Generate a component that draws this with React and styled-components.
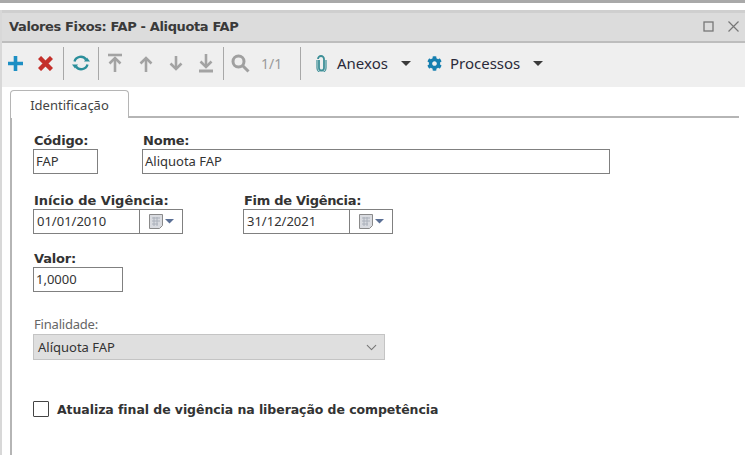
import React from "react";
import styled, { createGlobalStyle } from "styled-components";
import { FaCog } from "react-icons/fa";
import { ChevronDown } from "lucide-react";

const Global = createGlobalStyle`
  html, body {
    margin: 0;
    background: #fff;
    overflow: hidden;
  }
  body {
    font-family: "Noto Sans", "Liberation Sans", sans-serif;
    color: #222;
  }
`;

const Page = styled.div`
  width: 745px;
  height: 455px;
  display: flex;
  flex-direction: column;
  overflow: hidden;
`;
const TopStrip = styled.div`
  height: 10px;
  flex: none;
  border-top: 3px solid #a9a9a9;
  box-sizing: border-box;
`;
const Window = styled.div`
  flex: 1;
  display: flex;
  flex-direction: column;
  border-left: 2px solid #d8d8d8;
  min-height: 0;
`;
const TitleBar = styled.div`
  height: 33px;
  box-sizing: border-box;
  flex: none;
  display: flex;
  align-items: center;
  justify-content: space-between;
  padding: 0 6px 1px 7px;
  background: #dcdcdc;
  border-top: 3px solid #cfcfcf;
  border-bottom: 2px solid #bdbdbd;
`;
const Title = styled.div`
  font: bold 13px "DejaVu Sans", sans-serif;
  letter-spacing: -0.37px;
  color: #3a3a3a;
`;
const WindowButtons = styled.div`
  display: flex;
  align-items: center;
  gap: 14px;
  color: #777;
`;
const Toolbar = styled.div`
  height: 44px;
  flex: none;
  display: flex;
  align-items: center;
  background: #efefef;
  box-sizing: border-box;
  padding: 0 0 4px 6px;
`;
const IconSlot = styled.span`
  width: ${(p) => p.$w}px;
  box-sizing: border-box;
  padding-left: ${(p) => p.$pl || 0}px;
  display: flex;
  align-items: center;
  justify-content: center;
  flex: none;
`;
const Divider = styled.span`
  width: 1px;
  height: 33px;
  background: #a8a8a8;
  flex: none;
  margin: ${(p) => p.$margin || "0"};
`;
const Pager = styled.span`
  font-size: 14px;
  color: #9a9a9a;
  margin-left: 5px;
  width: 30px;
`;
const MenuButton = styled.span`
  display: flex;
  align-items: center;
  font-size: 15px;
  color: #2a2a3a;
  margin-right: ${(p) => p.$gap}px;
`;
const MenuIcon = styled.span`
  display: flex;
  margin-right: ${(p) => p.$gap}px;
`;
const Caret = styled.span`
  width: 0;
  height: 0;
  border-left: 5px solid transparent;
  border-right: 5px solid transparent;
  border-top: 5px solid #3a3a3a;
  margin-left: 13px;
`;
const Panel = styled.div`
  flex: 1;
  background: #fff;
  margin-right: 4px;
  padding-left: 8px;
  display: flex;
  flex-direction: column;
`;
const TabRow = styled.div`
  height: 31px;
  flex: none;
  display: flex;
  align-items: flex-end;
  border-bottom: 2px solid #b5b5b5;
  box-sizing: border-box;
  margin-right: 2px;
`;
const Tab = styled.div`
  width: 117px;
  height: 27px;
  box-sizing: content-box;
  margin-bottom: -2px;
  background: #fff;
  border: 1px solid #b5b5b5;
  border-bottom: 0;
  border-radius: 4px 4px 0 0;
  font-size: 13px;
  color: #444;
  display: flex;
  align-items: center;
  justify-content: center;
`;
const TabBody = styled.div`
  flex: 1;
  border-left: 2px solid #b5b5b5;
  padding: 15px 0 0 21px;
  display: flex;
  flex-direction: column;
`;
const FormRow = styled.div`
  display: flex;
  gap: ${(p) => p.$gap || 0}px;
  margin-bottom: ${(p) => p.$mb || 0}px;
`;
const Field = styled.div`
  display: flex;
  flex-direction: column;
  margin-left: ${(p) => p.$ml || 0}px;
`;
const Label = styled.label`
  font: bold 13px/16px "DejaVu Sans", sans-serif;
  letter-spacing: ${(p) => p.$ls || "-0.2px"};
  color: #333;
  height: 16px;
  padding-left: 1px;
`;
const TextBox = styled.div`
  width: ${(p) => p.$w}px;
  height: 25px;
  box-sizing: border-box;
  border: 1px solid #808080;
  background: #fff;
  font-size: 13px;
  line-height: 23px;
  color: #333;
  padding-left: 2px;
`;
const DateBox = styled.div`
  width: 150px;
  height: 25px;
  box-sizing: border-box;
  border: 1px solid #808080;
  display: flex;
`;
const DateText = styled.div`
  width: 102px;
  font-size: 13px;
  line-height: 23px;
  color: #333;
  padding-left: 3px;
  border-right: 1px solid #808080;
`;
const DateButton = styled.div`
  flex: 1;
  display: flex;
  align-items: center;
  justify-content: center;
`;
const PlainLabel = styled.div`
  font-size: 13px;
  line-height: 16px;
  color: #666;
  letter-spacing: -0.2px;
  padding-left: 1px;
`;
const Select = styled.div`
  width: 352px;
  height: 26px;
  box-sizing: border-box;
  margin-top: 2px;
  background: #dfdfdf;
  border: 1px solid #c4c4c4;
  display: flex;
  align-items: center;
  justify-content: space-between;
  padding: 0 4px 0 3px;
  font-size: 13px;
  color: #333;
`;
const SelectText = styled.span`
  padding-left: 1px;
`;
const CheckRow = styled.div`
  display: flex;
  align-items: center;
  gap: 8px;
  margin-top: 41px;
`;
const Check = styled.span`
  width: 14px;
  height: 14px;
  border: 1px solid #444;
  border-radius: 1px;
  background: #fff;
  flex: none;
`;
const CheckLabel = styled.span`
  font: bold 12.5px "DejaVu Sans", sans-serif;
  color: #333;
  letter-spacing: -0.07px;
`;

const PlusIcon = () => (
  <svg width="15" height="15" viewBox="0 0 15 15" stroke="#1d8fc4" strokeWidth="3.6">
    <path d="M7.5 0v15M0 7.5h15" />
  </svg>
);

const CrossIcon = () => (
  <svg width="15" height="15" viewBox="0 0 15 15" stroke="#c4302b" strokeWidth="4.4">
    <path d="m1.5 1.5 12 12M13.5 1.5l-12 12" />
  </svg>
);

const ClipIcon = () => (
  <svg width="11" height="17" viewBox="0 0 11 17" fill="none" stroke="#3d8f97" strokeWidth="1.8">
    <path d="M3 5v8a2.5 2.5 0 0 0 5 0V4a3 3 0 0 0-6 0" />
    <path d="M10 5v8a4.5 4.5 0 0 1-9 0V5" strokeWidth="1.2" />
  </svg>
);

const ArrowIcon = ({ kind }) => (
  <svg width="16" height="20" viewBox="0 0 16 20" fill="none" stroke="#a3a3a3" strokeWidth="2.6">
    {kind === "first" && <path d="M1 2h14" />}
    {kind === "last" && <path d="M1 18h14" strokeWidth="3" />}
    {kind === "first" || kind === "up" ? (
      <>
        <path d="M8 19V6" />
        <path d="M2.5 10.5 8 5l5.5 5.5" />
      </>
    ) : (
      <>
        <path d={kind === "last" ? "M8 1v12" : "M8 3v13"} />
        <path d={kind === "last" ? "M2.5 8.5 8 14l5.5-5.5" : "M2.5 10.5 8 16l5.5-5.5"} />
      </>
    )}
  </svg>
);

const RefreshIcon = () => (
  <svg width="18" height="16" viewBox="0 0 18 16" fill="none" stroke="#2b8f9b" strokeWidth="2.4">
    <path d="M2.5 6.5a6.5 6.5 0 0 1 11.5-2" />
    <path d="M15.5 9.5a6.5 6.5 0 0 1-11.5 2" />
    <path d="M12 6.5h6l-3-4z" fill="#2b8f9b" stroke="none" />
    <path d="M6 9.5H0l3 4z" fill="#2b8f9b" stroke="none" />
  </svg>
);

const SearchIcon = () => (
  <svg width="19" height="19" viewBox="0 0 19 19" fill="none" stroke="#a0a0a0" strokeWidth="3">
    <circle cx="7.5" cy="7.5" r="5.5" />
    <path d="m11.5 11.5 6 6" />
  </svg>
);

const CalendarIcon = () => (
  <svg width="25" height="15" viewBox="0 0 25 15">
    <path d="M.5.5h13v11l-3 3H.5z" fill="#d9dbe0" stroke="#8a8a8a" />
    <path d="M3 4h8M3 7h8M3 10h6M5 3v9M8 3v9" stroke="#aab0ba" strokeWidth="1" />
    <path d="M16 5h9l-4.5 4.5z" fill="#5a6f95" />
  </svg>
);

const DateField = ({ value }) => (
  <DateBox>
    <DateText>{value}</DateText>
    <DateButton>
      <CalendarIcon />
    </DateButton>
  </DateBox>
);

const App = () => {
  return (
    <Page>
      <Global />
      <TopStrip />
      <Window>
        <TitleBar>
          <Title>Valores Fixos: FAP - Aliquota FAP</Title>
          <WindowButtons>
            <svg width="11" height="11" viewBox="0 0 11 11" fill="none" stroke="#777" strokeWidth="1.3">
              <rect x="1" y="1" width="9" height="9" />
            </svg>
            <svg width="11" height="11" viewBox="0 0 11 11" fill="none" stroke="#777" strokeWidth="1.2">
              <path d="m.5.5 10 10M10.5.5l-10 10" />
            </svg>
          </WindowButtons>
        </TitleBar>
        <Toolbar>
          <IconSlot $w={15}><PlusIcon /></IconSlot>
          <IconSlot $w={40} $pl={5}><CrossIcon /></IconSlot>
          <Divider />
          <IconSlot $w={34}><RefreshIcon /></IconSlot>
          <Divider />
          <IconSlot $w={32}><ArrowIcon kind="first" /></IconSlot>
          <IconSlot $w={30}><ArrowIcon kind="up" /></IconSlot>
          <IconSlot $w={30}><ArrowIcon kind="down" /></IconSlot>
          <IconSlot $w={29}><ArrowIcon kind="last" /></IconSlot>
          <Divider $margin="0 0 0 3px" />
          <IconSlot $w={32}><SearchIcon /></IconSlot>
          <Pager>1/1</Pager>
          <Divider $margin="0 15px 0 9px" />
          <MenuButton $gap={16}>
            <MenuIcon $gap={10}><ClipIcon /></MenuIcon>
            Anexos
            <Caret />
          </MenuButton>
          <MenuButton $gap={0}>
            <MenuIcon $gap={8}><FaCog size={15} color="#167fb0" /></MenuIcon>
            Processos
            <Caret />
          </MenuButton>
        </Toolbar>
        <Panel>
          <TabRow>
            <Tab>Identificação</Tab>
          </TabRow>
          <TabBody>
            <FormRow $mb={19}>
              <Field>
                <Label>Código:</Label>
                <TextBox $w={65}>FAP</TextBox>
              </Field>
              <Field $ml={44}>
                <Label>Nome:</Label>
                <TextBox $w={468}>Aliquota FAP</TextBox>
              </Field>
            </FormRow>
            <FormRow $gap={60} $mb={17}>
              <Field>
                <Label $ls="0px">Início de Vigência:</Label>
                <DateField value="01/01/2010" />
              </Field>
              <Field>
                <Label $ls="-0.3px">Fim de Vigência:</Label>
                <DateField value="31/12/2021" />
              </Field>
            </FormRow>
            <FormRow $mb={24}>
              <Field>
                <Label>Valor:</Label>
                <TextBox $w={90}>1,0000</TextBox>
              </Field>
            </FormRow>
            <Field>
              <PlainLabel>Finalidade:</PlainLabel>
              <Select>
                <SelectText>Alíquota FAP</SelectText>
                <ChevronDown size={17} color="#777" strokeWidth={1.5} />
              </Select>
            </Field>
            <CheckRow>
              <Check />
              <CheckLabel>Atualiza final de vigência na liberação de competência</CheckLabel>
            </CheckRow>
          </TabBody>
        </Panel>
      </Window>
    </Page>
  );
};

export default App;
